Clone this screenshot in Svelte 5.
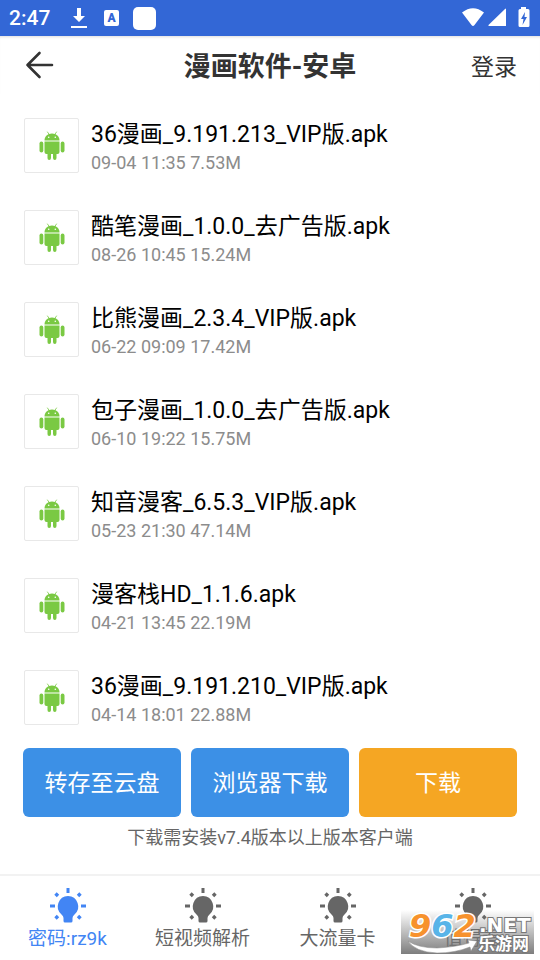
<script lang="ts">
  interface ApkFile {
    name: string;
    date: string;
    size: string;
  }

  const files: ApkFile[] = [
    { name: "36漫画_9.191.213_VIP版.apk", date: "09-04 11:35", size: "7.53M" },
    { name: "酷笔漫画_1.0.0_去广告版.apk", date: "08-26 10:45", size: "15.24M" },
    { name: "比熊漫画_2.3.4_VIP版.apk", date: "06-22 09:09", size: "17.42M" },
    { name: "包子漫画_1.0.0_去广告版.apk", date: "06-10 19:22", size: "15.75M" },
    { name: "知音漫客_6.5.3_VIP版.apk", date: "05-23 21:30", size: "47.14M" },
    { name: "漫客栈HD_1.1.6.apk", date: "04-21 13:45", size: "22.19M" },
    { name: "36漫画_9.191.210_VIP版.apk", date: "04-14 18:01", size: "22.88M" },
  ];

  const tabs = ["密码:rz9k", "短视频解析", "大流量卡", "值得看"];
  let active = $state(0);
</script>

<div class="page">
  <div class="status">
    <span class="time">2:47</span>
    <svg width="16" height="22" viewBox="0 0 16 22" fill="#fff">
      <path d="M6 1h4v8h4l-6 6-6-6h4zM0 19h16v2H0z" />
    </svg>
    <span class="letter">A</span>
    <span class="square"></span>
    <svg class="signal" width="68" height="24" viewBox="0 0 68 24" fill="#fff">
      <path d="M0 6.5Q11-2 22 6.5L12.5 19q-1.5 2-3 0z" />
      <path d="M44 3v17H27q-1 0-.5-1L43 3q1-1 1 0z" />
      <path
        fill-rule="evenodd"
        d="M59 1h5v2h2q1.500 0 1.500 1.500v15Q67.500 21 66 21h-8q-1.500 0-1.500-1.500v-15Q56.500 3 58 3h1zM63 6l-4 7h2.500l-1 6 4.500-8h-2.500z"
      />
    </svg>
  </div>

  <header>
    <button class="back" aria-label="返回">
      <svg width="28" height="28" viewBox="0 0 28 28">
        <path
          d="M13.500 2 1.500 14l12 12M1.500 14h24.500"
          fill="none"
          stroke="#333"
          stroke-width="2.6"
          stroke-linecap="round"
          stroke-linejoin="round"
        />
      </svg>
    </button>
    <h1>漫画软件-安卓</h1>
    <a class="login" href="#login">登录</a>
  </header>

  <main>
    <ul>
      {#each files as file}
        <li>
          <div class="thumb">
            <svg width="26" height="30" viewBox="0 0 26 30" fill="#7ac943">
              <path d="M5.500 9.500C5.500 5.500 8.500 2.500 13 2.500s7.500 3 7.500 7z" />
              <path
                d="m8.500 1 2 3M17.500 1l-2 3"
                stroke="#7ac943"
                stroke-width="0.8"
                stroke-linecap="round"
              />
              <circle cx="9.700" cy="6.300" r="0.800" fill="#fff" />
              <circle cx="16.300" cy="6.300" r="0.800" fill="#fff" />
              <path
                d="M5.500 10.500h15V21q0 2-2 2h-1v4q0 2-1.700 2T14 27v-4h-2v4q0 2-1.800 2T8.500 27v-4h-1q-2 0-2-2z"
              />
              <rect x="0.500" y="10.500" width="3.800" height="11" rx="1.900" />
              <rect x="21.700" y="10.500" width="3.800" height="11" rx="1.900" />
            </svg>
          </div>
          <div class="info">
            <div class="name">{file.name}</div>
            <div class="meta">{file.date} {file.size}</div>
          </div>
        </li>
      {/each}
    </ul>

    <div class="actions">
      <button>转存至云盘</button>
      <button>浏览器下载</button>
      <button class="download">下载</button>
    </div>
    <p class="note">下载需安装v7.4版本以上版本客户端</p>
  </main>

  <nav>
    {#each tabs as tab, i}
      <button class:active={i === active} onclick={() => (active = i)}>
        <svg width="36" height="36" viewBox="0 0 36 36" fill="currentColor">
          <path
            d="M18 8a10.500 10.500 0 0 1 6.500 18.500q-2 1.500-2 3.500v3q0 1.500-1.500 1.500h-6q-1.500 0-1.500-1.500v-3q0-2-2-3.500A10.500 10.500 0 0 1 18 8z"
          />
          <path d="M16.500 0h3v5h-3zM0 16.500h5v3H0zM31 16.500h5v3h-5z" />
          <path
            d="m5.500 5.500 2.500 2.500M30.500 5.500l-2.500 2.500M5.500 30.500l2.500-2.500M30.500 30.500l-2.500-2.500"
            stroke="currentColor"
            stroke-width="3.400"
          />
        </svg>
        <span>{tab}</span>
      </button>
    {/each}

    <div class="watermark">
      <svg viewBox="0 0 133 44" width="133" height="44">
        <defs>
          <linearGradient id="shade" x1="0" y1="0" x2="0" y2="1">
            <stop offset="0" stop-color="#777" stop-opacity="0" />
            <stop offset="1" stop-color="#777" stop-opacity="0.95" />
          </linearGradient>
        </defs>
        <rect width="133" height="44" fill="url(#shade)" />
        <text class="digits" x="8" y="27">
          <tspan>9</tspan><tspan class="blue">6</tspan><tspan>2</tspan>
        </text>
        <path
          d="M7 31q10 7 29 7 19-1 32-5l-1-3 9 1-6 10-1-4q-15 6-33 6-22-1-29-12z"
          fill="#fff"
          stroke="#888"
          stroke-width="0.5"
        />
        <text class="net" x="78" y="22">.NET</text>
        <text class="site" x="77" y="40">乐游网</text>
      </svg>
    </div>
  </nav>
</div>

<style>
  :global(body) {
    margin: 0;
    background: #fff;
  }
  .page {
    display: flex;
    flex-direction: column;
    min-height: 100vh;
    font-family: Roboto, "Noto Sans CJK SC", sans-serif;
    color: #333;
  }
  button {
    font: inherit;
    border: none;
    padding: 0;
    cursor: pointer;
  }
  svg {
    display: block;
    overflow: visible;
  }

  .status {
    display: flex;
    align-items: center;
    box-sizing: border-box;
    height: 36px;
    padding: 0 10px 0 9px;
    color: #fff;
    background: #3367d6;
  }
  .time {
    width: 62px;
    font-size: 21px;
    font-weight: 500;
  }
  .letter {
    width: 15px;
    margin: 0 14px 0 17px;
    border-radius: 2px;
    background: #fff;
    color: #3367d6;
    font-size: 12px;
    font-weight: 900;
    line-height: 16px;
    text-align: center;
  }
  .square {
    width: 23px;
    height: 23px;
    border-radius: 5px;
    background: #fff;
  }
  .signal {
    margin-left: auto;
  }

  header {
    display: grid;
    grid-template-columns: 1fr auto 1fr;
    align-items: center;
    height: 58px;
    padding: 0 23px;
    box-shadow: inset 0 3px 3px -2px #ddd;
  }
  .back {
    justify-self: start;
    padding-left: 3px;
    background: none;
  }
  h1 {
    margin: 0;
    padding-top: 3px;
    font-size: 27px;
    font-weight: 700;
    line-height: 36px;
  }
  .login {
    justify-self: end;
    color: #333;
    font-size: 23px;
    text-decoration: none;
  }

  main {
    flex: 1;
    padding: 24px 23px 0;
  }
  ul {
    display: flex;
    flex-direction: column;
    gap: 37px;
    margin: 0;
    padding: 0;
    list-style: none;
  }
  li {
    display: flex;
    gap: 12px;
    padding-left: 1px;
  }
  .thumb {
    display: flex;
    align-items: center;
    justify-content: center;
    box-sizing: border-box;
    width: 55px;
    height: 55px;
    border: 1px solid #e8e8e8;
    border-radius: 2px;
  }
  .name {
    color: #000;
    font-size: 23px;
    line-height: 34px;
  }
  .meta {
    color: #8c8c8c;
    font-size: 18px;
    line-height: 21px;
  }

  .actions {
    display: flex;
    gap: 10px;
    margin-top: 23px;
  }
  .actions button {
    flex: 1;
    height: 69px;
    padding-bottom: 4px;
    border-radius: 6px;
    background: #3c90e6;
    color: #fff;
    font-size: 23px;
  }
  .actions .download {
    background: #f5a623;
  }
  .note {
    margin: 8px 0;
    color: #666;
    font-size: 18px;
    line-height: 26px;
    text-align: center;
  }

  nav {
    position: relative;
    display: flex;
    height: 84px;
    border-top: 2px solid #f2f2f2;
  }
  nav button {
    display: flex;
    flex: 1;
    flex-direction: column;
    gap: 1px;
    align-items: center;
    padding-top: 12px;
    background: none;
    color: #666;
    font-size: 19px;
    line-height: 28px;
  }
  nav .active {
    color: #4285f4;
  }
  .watermark {
    position: absolute;
    right: 6px;
    bottom: 6px;
    pointer-events: none;
  }
  .digits {
    font: italic 700 32px "DejaVu Sans", sans-serif;
    fill: #f7922d;
    stroke: #fff;
    stroke-width: 3px;
    paint-order: stroke;
  }
  .blue {
    fill: #58b4e8;
  }
  .net,
  .site {
    fill: #fff;
    stroke: #777;
    stroke-width: 2px;
    paint-order: stroke;
    font-weight: 700;
  }
  .net {
    font-family: "DejaVu Sans", sans-serif;
    font-size: 20px;
  }
  .site {
    font-size: 17px;
  }
</style>
